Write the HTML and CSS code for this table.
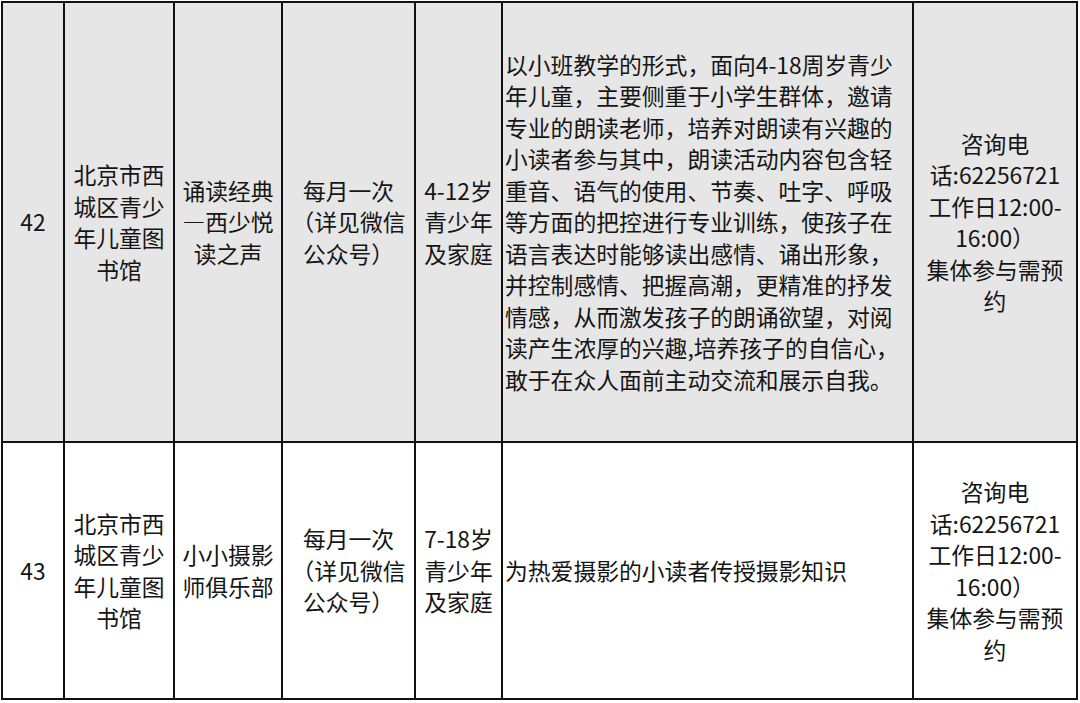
FILE: index.html
```html
<!DOCTYPE html>
<html lang="zh-CN">
<head>
<meta charset="utf-8">
<title>活动列表</title>
<link rel="stylesheet" href="styles.css">
</head>
<body>
<table class="grid">
  <colgroup>
    <col class="c-no">
    <col class="c-org">
    <col class="c-name">
    <col class="c-freq">
    <col class="c-age">
    <col class="c-desc">
    <col class="c-contact">
  </colgroup>
  <tbody>
    <tr class="row-a">
      <td class="center">42</td>
      <td class="center">北京市西<br>城区青少<br>年儿童图<br>书馆</td>
      <td class="center">诵读经典<br>—西少悦<br>读之声</td>
      <td class="center">每月一次<br>（详见微信<br>公众号）</td>
      <td class="center">4-12岁<br>青少年<br>及家庭</td>
      <td class="desc">以小班教学的形式，面向4-18周岁青少<br>年儿童，主要侧重于小学生群体，邀请<br>专业的朗读老师，培养对朗读有兴趣的<br>小读者参与其中，朗读活动内容包含轻<br>重音、语气的使用、节奏、吐字、呼吸<br>等方面的把控进行专业训练，使孩子在<br>语言表达时能够读出感情、诵出形象，<br>并控制感情、把握高潮，更精准的抒发<br>情感，从而激发孩子的朗诵欲望，对阅<br>读产生浓厚的兴趣,培养孩子的自信心，<br>敢于在众人面前主动交流和展示自我。</td>
      <td class="center">咨询电<br>话:62256721<br>工作日12:00-<br>16:00）<br>集体参与需预<br>约</td>
    </tr>
    <tr class="row-b">
      <td class="center">43</td>
      <td class="center">北京市西<br>城区青少<br>年儿童图<br>书馆</td>
      <td class="center">小小摄影<br>师俱乐部</td>
      <td class="center">每月一次<br>（详见微信<br>公众号）</td>
      <td class="center">7-18岁<br>青少年<br>及家庭</td>
      <td class="desc">为热爱摄影的小读者传授摄影知识</td>
      <td class="center">咨询电<br>话:62256721<br>工作日12:00-<br>16:00）<br>集体参与需预<br>约</td>
    </tr>
  </tbody>
</table>
</body>
</html>
```

FILE: styles.css
```css
html, body {
  margin: 0;
  padding: 0;
  background: #ffffff;
}

body {
  font-family: "Noto Sans CJK SC", "Microsoft YaHei", "Noto Sans", sans-serif;
  color: #151515;
}

.grid {
  margin: 1px 0 0 1px;
  border-collapse: collapse;
  table-layout: fixed;
  width: 1077px;
  font-size: 22.8px;
  line-height: 31.5px;
}

.c-no { width: 62px; }
.c-org { width: 110px; }
.c-name { width: 108px; }
.c-freq { width: 133px; }
.c-age { width: 87px; }
.c-desc { width: 411px; }
.c-contact { width: 164px; }

.grid td {
  border: 2px solid #111111;
  padding: 0;
  vertical-align: middle;
}

.row-a { height: 440px; }
.row-a td { background: #e6e6e6; }

.row-b { height: 257px; }
.row-b td { background: #ffffff; }

.center {
  text-align: center;
  white-space: nowrap;
}

.desc {
  text-align: left;
  padding-left: 2px !important;
  white-space: nowrap;
}
```
